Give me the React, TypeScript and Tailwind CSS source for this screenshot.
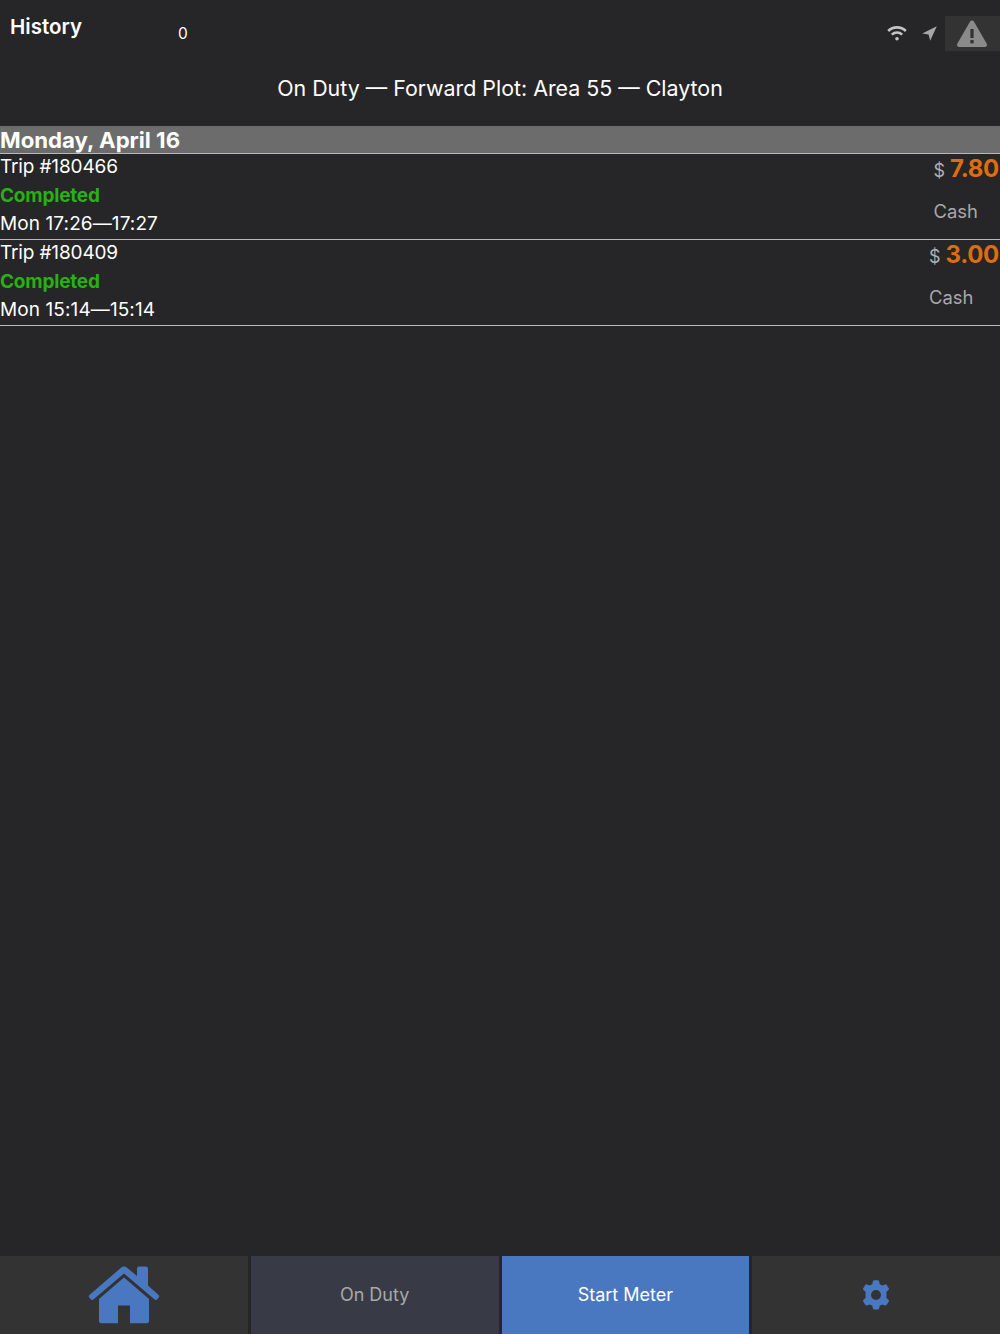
const trips = [
  { id: '180466', time: 'Mon 17:26—17:27', fare: '7.80' },
  { id: '180409', time: 'Mon 15:14—15:14', fare: '3.00' },
];

function WifiIcon() {
  return (
    <svg width="20" height="16" viewBox="0 0 20 16" fill="none" stroke="#c4c4c4" strokeWidth="2.6">
      <path d="M1.2 6C6 1.2 14 1.2 18.8 6" />
      <path d="M4.8 9.6C7.8 6.8 12.2 6.8 15.2 9.6" />
      <circle cx="10" cy="13.8" r="1.8" fill="#c4c4c4" stroke="none" />
    </svg>
  );
}

function LocationIcon() {
  return (
    <svg width="15" height="15" viewBox="0 0 15 15" fill="#a6a6a6">
      <path d="M14.8 0.2 L0.2 7.4 L6.6 8.4 L8.2 14.8 Z" />
    </svg>
  );
}

function WarningIcon() {
  return (
    <svg width="32" height="29" viewBox="0 0 32 29">
      <path d="M16 1.5 C17 1.5 17.6 2 18.2 3 L30.6 24.4 C31.6 26.2 30.6 28 28.6 28 L3.4 28 C1.4 28 0.4 26.2 1.4 24.4 L13.8 3 C14.4 2 15 1.5 16 1.5 Z" fill="#8a8a8a" />
      <rect x="14.4" y="10" width="3.2" height="9" fill="#333333" />
      <rect x="14.4" y="21" width="3.2" height="3.4" fill="#333333" />
    </svg>
  );
}

function HomeIcon() {
  return (
    <svg width="72" height="58" viewBox="0 0 72 58" fill="#4a78c0">
      <path d="M36 0.5 C37 0.5 38 1 39 1.8 L49 10 L49 3 C49 1.6 50 0.6 51 0.6 L58 0.6 C59.4 0.6 60 1.6 60 3 L60 19.5 L70.6 29 C71.4 29.8 71.4 30.6 70.8 31.4 L69 33.4 C68.2 34.2 67.4 34.2 66.6 33.6 L36 7.4 L5.4 33.6 C4.6 34.2 3.8 34.2 3 33.4 L1.2 31.4 C0.6 30.6 0.6 29.8 1.4 29 L33 1.8 C34 1 35 0.5 36 0.5 Z" />
      <path d="M36 11.5 L61 33 L61 55 C61 56.4 60 57.2 59 57.2 L42 57.2 L42 39.5 L30 39.5 L30 57.2 L13 57.2 C12 57.2 11 56.4 11 55 L11 33 Z" />
    </svg>
  );
}

function GearIcon() {
  return (
    <svg width="30" height="30" viewBox="0 0 30 30">
      <path
        fill="#4a78c0"
        fillRule="evenodd"
        d="M12 1 C12.2 0.5 12.6 0.3 13.1 0.3 L16.9 0.3 C17.4 0.3 17.8 0.5 18 1 L18.8 4.2 C19.6 4.5 20.3 4.9 21 5.4 L24.4 4.4 C24.9 4.3 25.3 4.4 25.6 4.8 L27.9 8.6 C28.1 9 28.1 9.4 27.7 9.8 L25.3 12.1 C25.5 13 25.5 13.8 25.5 14.9 C25.5 16 25.5 16.8 25.3 17.7 L27.7 20 C28.1 20.4 28.1 20.8 27.9 21.2 L25.6 25 C25.3 25.4 24.9 25.5 24.4 25.4 L21 24.4 C20.3 24.9 19.6 25.3 18.8 25.6 L18 28.8 C17.8 29.3 17.4 29.5 16.9 29.5 L13.1 29.5 C12.6 29.5 12.2 29.3 12 28.8 L11.2 25.6 C10.4 25.3 9.7 24.9 9 24.4 L5.6 25.4 C5.1 25.5 4.7 25.4 4.4 25 L2.1 21.2 C1.9 20.8 1.9 20.4 2.3 20 L4.7 17.7 C4.5 16.8 4.5 16 4.5 14.9 C4.5 13.8 4.5 13 4.7 12.1 L2.3 9.8 C1.9 9.4 1.9 9 2.1 8.6 L4.4 4.8 C4.7 4.4 5.1 4.3 5.6 4.4 L9 5.4 C9.7 4.9 10.4 4.5 11.2 4.2 Z M15 10 A5 5 0 1 0 15 20 A5 5 0 1 0 15 10 Z"
      />
    </svg>
  );
}

export default function App() {
  return (
    <div className="flex h-[1334px] w-[1000px] flex-col overflow-hidden bg-[#262628] font-['Inter',sans-serif] text-white">
      <header className="h-[126px] shrink-0">
        <div className="flex h-[52px] items-start">
          <div className="w-[178px] pl-[10px] pt-[14px] text-[20.5px]/[25px] font-semibold">History</div>
          <div className="pt-[24px] text-[15.5px]/[19px]">0</div>
          <div className="ml-auto flex items-start">
            <div className="pl-px pt-[25px]">
              <WifiIcon />
            </div>
            <div className="ml-[15px] pt-[26px]">
              <LocationIcon />
            </div>
            <div className="ml-[8px] mt-[16px] flex h-[35px] w-[55px] items-start justify-center bg-[#333333] pr-[2px] pt-[3px]">
              <WarningIcon />
            </div>
          </div>
        </div>
        <div className="pt-[21px] text-center text-[21.4px]/[30px]">On Duty — Forward Plot: Area 55 — Clayton</div>
      </header>

      <main className="flex-1">
        <div className="h-[28px] border-b border-[#b8b8b8] bg-[#6c6c6c] text-[22.2px]/[28px] font-bold">Monday, April 16</div>
        {trips.map((trip) => (
          <div key={trip.id} className="flex h-[86px] justify-between border-b border-[#b8b8b8]">
            <div className="-mt-[1px] text-[19px]/[28.5px]">
              <div className="tracking-[-0.15px]">Trip #{trip.id}</div>
              <div className="font-bold tracking-[-0.2px] text-[#28b014]">Completed</div>
              <div className="tracking-[0.1px]">{trip.time}</div>
            </div>
            <div className="flex flex-col items-stretch pr-px">
              <div className="flex h-[30px] items-baseline pt-[1px] text-[#b0b0b0]">
                <span className="text-[18px]/[28px]">$</span>
                <span className="ml-[5px] text-[24px]/[28px] font-bold tracking-[-0.3px] text-[#df6c10]">{trip.fare}</span>
              </div>
              <div className="pt-[12px] text-[18.4px]/[30px] text-[#a8a8a8]">Cash</div>
            </div>
          </div>
        ))}
      </main>

      <nav className="grid h-[78px] shrink-0 grid-cols-4 gap-[3px] text-[18px]">
        <div className="flex items-center justify-center bg-[#333333] pb-px">
          <HomeIcon />
        </div>
        <div className="flex items-center justify-center bg-[#383b45] pb-[2px] text-[#a8a8a8]">On Duty</div>
        <div className="flex items-center justify-center bg-[#4a78c0] pb-[2px]">Start Meter</div>
        <div className="flex items-center justify-center bg-[#333333]">
          <GearIcon />
        </div>
      </nav>
    </div>
  );
}
